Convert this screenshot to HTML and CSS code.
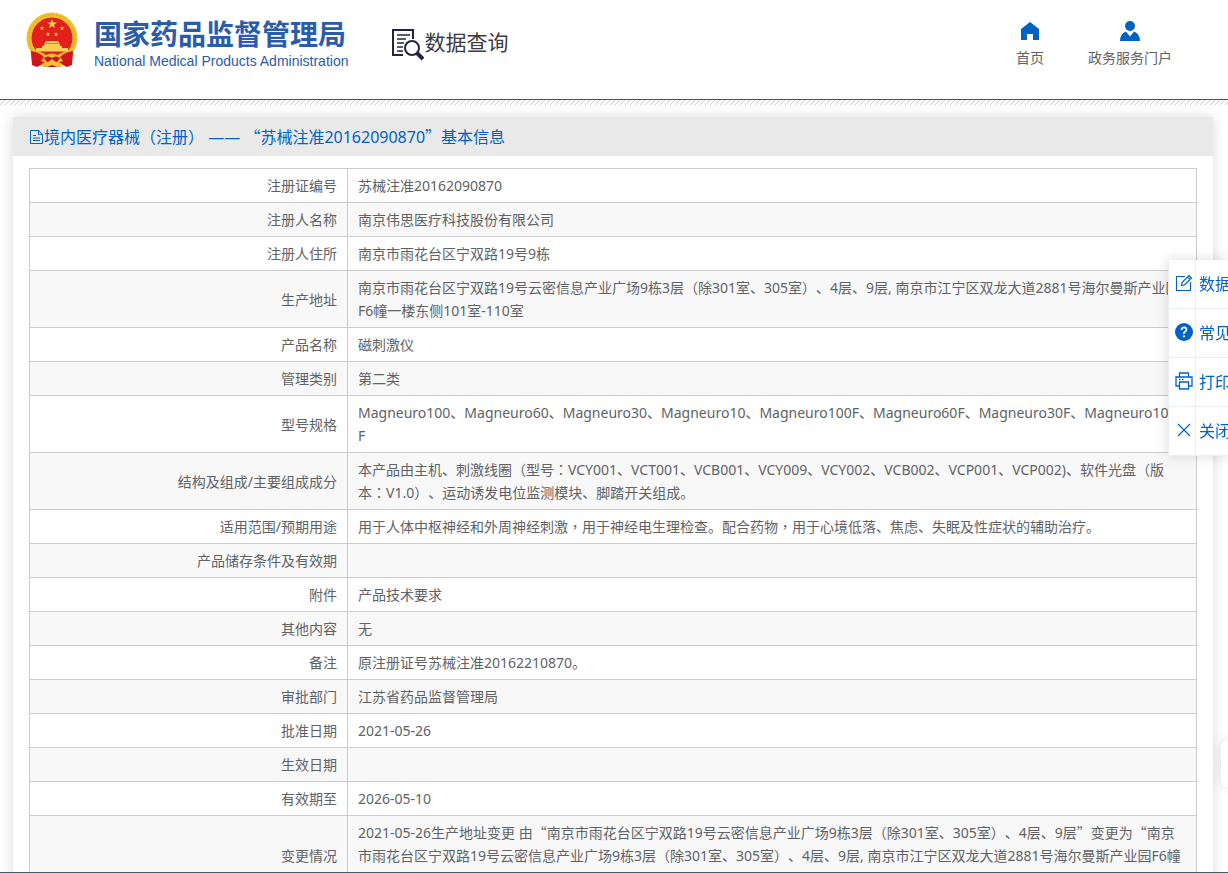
FILE: index.html
```html
<!DOCTYPE html>
<html lang="zh-CN">
<head>
    <meta charset="UTF-8">
    <meta name="viewport" content="width=device-width, initial-scale=1.0">
    <title>国家药品监督管理局 数据查询</title>
    <link rel="stylesheet" href="styles.css">
</head>
<body>
    <header class="header">
        <a class="logo" href="#">
            <svg class="emblem" viewBox="0 0 52 56" aria-hidden="true">
                <path d="M5 38L6 53l5 2 4-2 4 2h14l4-2 4 2 5-2 1-15z" fill="#c9141a"/>
                <circle cx="26" cy="26" r="25.500" fill="#f2bf2f"/>
                <circle cx="26" cy="26" r="23" fill="none" stroke="#dda524" stroke-width="1" stroke-dasharray="2 2"/>
                <circle cx="26" cy="26" r="20.500" fill="#e3201c"/>
                <path d="M26 7l1.200 3.500h3.700l-3 2.200 1.100 3.500-3-2.100-3 2.100 1.100-3.500-3-2.200h3.700z" fill="#ffd84a"/>
                <path d="M16 14l.6 1.500 1.600.1-1.200 1 .4 1.600-1.400-.9-1.400.9.4-1.600-1.200-1 1.600-.1zM36 14l.6 1.500 1.600.1-1.200 1 .4 1.600-1.400-.9-1.400.9.4-1.600-1.200-1 1.600-.1zM22 20l.6 1.500 1.600.1-1.200 1 .4 1.600-1.400-.9-1.400.9.4-1.600-1.200-1 1.600-.1zM30 20l.6 1.500 1.600.1-1.200 1 .4 1.600-1.400-.9-1.400.9.4-1.600-1.200-1 1.600-.1z" fill="#ffcf3a"/>
                <path d="M20 29h12l1 2H19zM18 31.500h16v2.500h2v2H16v-2h2zM10 36h32v3.500H10z" fill="#f6cf58"/>
                <path d="M6 38q9 1 14 5q6-3 12 0q5-4 14-5l-2 7-10 2q-8 2-16 0l-10-2z" fill="#f0bd33"/>
                <path d="M5 39q8 1 13 6l-4 5q-4-3-8-1zM47 39q-8 1-13 6l4 5q4-3 8-1z" fill="#d3161a"/>
                <path d="M18 46q4-3 8 0q4-3 8 0l-3 4H21z" fill="#c9141a"/>
                <path d="M14 54q3-4 8-4l4-3 4 3q5 0 8 4l-7 1-5-2-5 2z" fill="#f2c137"/>
            </svg>
            <span class="logo-text">
                <span class="logo-cn">国家药品监督管理局</span>
                <span class="logo-en">National Medical Products Administration</span>
            </span>
        </a>
        <a class="query" href="#">
            <svg class="query-icon" viewBox="0 0 32 32" aria-hidden="true">
                <path d="M11 26H1V1h20v9" fill="none" stroke="#25253a" stroke-width="2"/>
                <path d="M5 6h13M5 10h9M5 14h7M5 18h6M5 22h6" stroke="#25253a" stroke-width="1.500"/>
                <circle cx="20" cy="19" r="7" fill="#fff" stroke="#25253a" stroke-width="2"/>
                <path d="M25 24l6 6" stroke="#25253a" stroke-width="4"/>
            </svg>
            <span>数据查询</span>
        </a>
        <nav class="nav">
            <a href="#">
                <svg viewBox="0 0 20 20" aria-hidden="true"><path d="M10 1L19 8v11h-6v-6H7v6H1V8z" fill="#0062c4"/></svg>
                <span>首页</span>
            </a>
            <a href="#">
                <svg viewBox="0 0 20 20" aria-hidden="true"><circle cx="10" cy="5" r="5" fill="#0062c4"/><path d="M0 20q0-7 6-9.500l4 5 4-5q6 2.500 6 9.500z" fill="#0062c4"/></svg>
                <span>政务服务门户</span>
            </a>
        </nav>
    </header>
    <div class="hatch"></div>

    <main class="card">
        <h1 class="card-title">
            <svg class="doc-icon" viewBox="0 0 15 16" aria-hidden="true"><path d="M1.500 1.500h8l4 4v9h-12zM9.500 1.500v4h4M4 6.500h3M4 9h7M4 11.500h7" fill="none" stroke="#0062c4"/></svg>
            <span>境内医疗器械<i lang="zh-TW">（</i>注册<i lang="zh-TW">）</i> —— <i>“</i>苏械注准20162090870<i>”</i>基本信息</span>
        </h1>
        <table class="info">
            <tbody>
                <tr><th scope="row">注册证编号</th><td>苏械注准20162090870</td></tr>
                <tr><th scope="row">注册人名称</th><td>南京伟思医疗科技股份有限公司</td></tr>
                <tr><th scope="row">注册人住所</th><td>南京市雨花台区宁双路19号9栋</td></tr>
                <tr><th scope="row">生产地址</th><td>南京市雨花台区宁双路19号云密信息产业广场9栋3层<i lang="zh-TW">（</i>除301室、305室<i lang="zh-TW">）</i>、4层、9层, 南京市江宁区双龙大道2881号海尔曼斯产业园F6幢一楼东侧101室-110室</td></tr>
                <tr><th scope="row">产品名称</th><td>磁刺激仪</td></tr>
                <tr><th scope="row">管理类别</th><td>第二类</td></tr>
                <tr><th scope="row">型号规格</th><td>Magneuro100、Magneuro60、Magneuro30、Magneuro10、Magneuro100F、Magneuro60F、Magneuro30F、Magneuro10<br>F</td></tr>
                <tr><th scope="row">结构及组成/主要组成成分</th><td>本产品由主机、刺激线圈<i lang="zh-TW">（</i>型号<i lang="zh-TW">：</i>VCY001、VCT001、VCB001、VCY009、VCY002、VCB002、VCP001、VCP002)、软件光盘<i lang="zh-TW">（</i>版<br>本<i lang="zh-TW">：</i>V1.0<i lang="zh-TW">）</i>、运动诱发电位监测模块、脚踏开关组成。</td></tr>
                <tr><th scope="row">适用范围/预期用途</th><td>用于人体中枢神经和外周神经刺激<i lang="zh-TW">，</i>用于神经电生理检查。配合药物<i lang="zh-TW">，</i>用于心境低落、焦虑、失眠及性症状的辅助治疗。</td></tr>
                <tr><th scope="row">产品储存条件及有效期</th><td></td></tr>
                <tr><th scope="row">附件</th><td>产品技术要求</td></tr>
                <tr><th scope="row">其他内容</th><td>无</td></tr>
                <tr><th scope="row">备注</th><td>原注册证号苏械注准20162210870。</td></tr>
                <tr><th scope="row">审批部门</th><td>江苏省药品监督管理局</td></tr>
                <tr><th scope="row">批准日期</th><td>2021-05-26</td></tr>
                <tr><th scope="row">生效日期</th><td></td></tr>
                <tr><th scope="row">有效期至</th><td>2026-05-10</td></tr>
                <tr><th scope="row">变更情况</th><td>2021-05-26生产地址变更 由<i>“</i>南京市雨花台区宁双路19号云密信息产业广场9栋3层<i lang="zh-TW">（</i>除301室、305室<i lang="zh-TW">）</i>、4层、9层<i>”</i>变更为<i>“</i>南京市雨花台区宁双路19号云密信息产业广场9栋3层<i lang="zh-TW">（</i>除301室、305室<i lang="zh-TW">）</i>、4层、9层, 南京市江宁区双龙大道2881号海尔曼斯产业园F6幢一楼东侧101室-110室<i>”</i></td></tr>
            </tbody>
        </table>
    </main>

    <aside class="tools">
        <button type="button">
            <svg viewBox="0 0 18 18" aria-hidden="true"><path d="M10 2.500H1.500v14h14V8M6.500 11.500l.5-3 7-7 2.500 2.500-7 7zM12.500 3L15 5.500" fill="none" stroke="#0062c4" stroke-width="1.200"/></svg>
            <span>数据纠错</span>
        </button>
        <button type="button">
            <svg viewBox="0 0 18 18" aria-hidden="true"><circle cx="9" cy="9" r="9" fill="#0062c4"/><path d="M6.500 7q0-2.700 2.500-2.700T11.500 6.800q0 1.300-1.500 2T9 11" fill="none" stroke="#fff" stroke-width="1.700"/><circle cx="9" cy="13.300" r="1.100" fill="#fff"/></svg>
            <span>常见问题</span>
        </button>
        <button type="button">
            <svg viewBox="0 0 18 18" aria-hidden="true"><path d="M4.500 5V1h9v4M4.500 14H1V5h16v9h-3.500M4.500 10h9v7h-9zM4 7.500h1.500M7 7.500h1.500" fill="none" stroke="#0062c4" stroke-width="1.300"/></svg>
            <span>打印</span>
        </button>
        <button type="button">
            <svg viewBox="0 0 18 18" aria-hidden="true"><path d="M3 3l12 12M15 3L3 15" stroke="#0062c4" stroke-width="1.200"/></svg>
            <span>关闭</span>
        </button>
    </aside>
    <div class="side-tab"></div>
</body>
</html>
```
FILE: styles.css
```css
* {
    box-sizing: border-box;
}

body {
    margin: 0;
    height: 100vh;
    overflow: hidden;
    border-bottom: 1px solid #46586c;
    background: #fff;
    color: #606266;
    font-family: "Noto Sans", "Noto Sans CJK SC", sans-serif;
    font-size: 14px;
    line-height: 23px;
    text-spacing-trim: space-all;
}

a {
    color: inherit;
    text-decoration: none;
}

/* full-width punctuation, centred in its cell */
i {
    font-style: normal;
    font-family: "Noto Sans CJK TC", sans-serif;
}

.header {
    display: flex;
    align-items: flex-start;
    height: 100px;
    padding: 12px 56px 0 26px;
    border-bottom: 1px solid #0b5fb3;
}

.logo {
    display: flex;
    gap: 16px;
    color: #2a5caa;
    white-space: nowrap;
}

.emblem {
    width: 52px;
    height: 56px;
}

.logo-text {
    display: flex;
    flex-direction: column;
    padding-top: 2px;
}

.logo-cn {
    font-family: "Noto Sans CJK SC", sans-serif;
    font-size: 28px;
    font-weight: bold;
    line-height: 38px;
}

.logo-en {
    font-family: "Liberation Sans", sans-serif;
    font-size: 14px;
    line-height: 18px;
}

.query {
    display: flex;
    align-items: flex-start;
    margin: 17px 0 0 44px;
    color: #3c3c40;
    font-family: "Noto Sans CJK SC", sans-serif;
    font-size: 21px;
    line-height: 24px;
    white-space: nowrap;
}

.query-icon {
    width: 32px;
    height: 32px;
}

.nav {
    display: flex;
    gap: 44px;
    margin-left: auto;
    padding-top: 9px;
}

.nav a {
    display: flex;
    flex-direction: column;
    align-items: center;
    gap: 5px;
}

.nav svg {
    width: 20px;
    height: 20px;
}

.hatch {
    height: 5px;
    background: linear-gradient(135deg, transparent 42%, #ccc 42% 58%, transparent 58%) 0 0 / 5px 5px;
}

.card {
    margin: 12px 15px 0 13px;
    padding-bottom: 16px;
    background: #fff;
    box-shadow: 0 0 12px rgba(0, 0, 0, 0.15);
}

.card-title {
    display: flex;
    align-items: center;
    height: 39px;
    margin: 0 0 12px;
    padding: 0 16px;
    background: #e9e9e9;
    color: #0062c4;
    font-size: 16px;
    font-weight: normal;
}

.doc-icon {
    width: 15px;
    height: 16px;
}

.info {
    width: calc(100% - 32px);
    margin: 0 16px;
    border-collapse: collapse;
    table-layout: fixed;
}

.info th,
.info td {
    height: 34px;
    padding: 5px 10px;
    border: 1px solid #ccc;
    text-align: left;
    word-break: break-all;
}

.info th {
    width: 318px;
    font-weight: normal;
    text-align: right;
}

.info tr:nth-child(even) {
    background: #f8f8f8;
}

/* fixed toolbar at the right edge */
.tools {
    position: fixed;
    top: 260px;
    right: 0;
    width: 60px;
    overflow: hidden;
    background: #fff;
    border-left: 1px solid #ebeef5;
    box-shadow: 0 0 12px rgba(0, 0, 0, 0.15);
}

.tools button {
    display: flex;
    align-items: stretch;
    width: 100px;
    height: 49px;
    padding: 0;
    border: 0;
    border-bottom: 1px solid #ebeef5;
    background: none;
    color: #0062c4;
    font-family: inherit;
    font-size: 16px;
    line-height: 48px;
    white-space: nowrap;
    cursor: pointer;
}

.tools svg {
    width: 18px;
    height: 18px;
    margin: 14px 2px 0 6px;
}

.tools span {
    padding-left: 3px;
    border-left: 1px solid #ebeef5;
}

.side-tab {
    position: fixed;
    right: 0;
    bottom: 86px;
    width: 7px;
    height: 47px;
    border-radius: 8px 0 0 8px;
    background: #fff;
    box-shadow: 0 0 12px rgba(0, 0, 0, 0.15);
}
```
